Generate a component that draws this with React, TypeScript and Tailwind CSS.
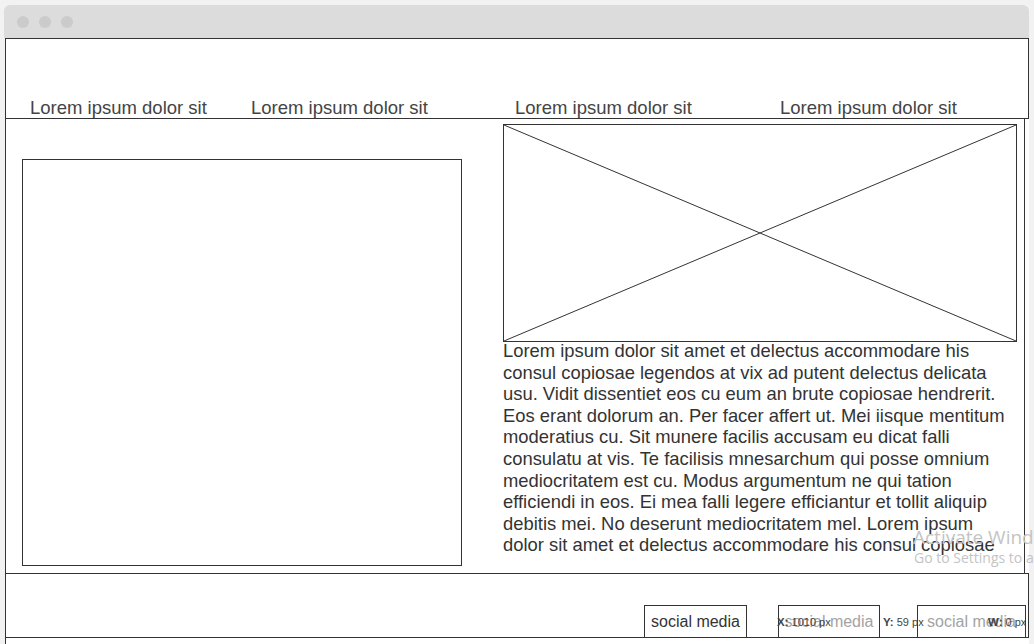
import React from 'react';

const navItems = [
  { label: 'Lorem ipsum dolor sit', width: 'w-[221px]' },
  { label: 'Lorem ipsum dolor sit', width: 'w-[264px]' },
  { label: 'Lorem ipsum dolor sit', width: 'w-[265px]' },
  { label: 'Lorem ipsum dolor sit', width: 'w-[220px]' },
];

const bodyText =
  'Lorem ipsum dolor sit amet et delectus accommodare his consul copiosae legendos at vix ad putent delectus delicata usu. Vidit dissentiet eos cu eum an brute copiosae hendrerit. Eos erant dolorum an. Per facer affert ut. Mei iisque mentitum moderatius cu. Sit munere facilis accusam eu dicat falli consulatu at vis. Te facilisis mnesarchum qui posse omnium mediocritatem est cu. Modus argumentum ne qui tation efficiendi in eos. Ei mea falli legere efficiantur et tollit aliquip debitis mei. No deserunt mediocritatem mel. Lorem ipsum dolor sit amet et delectus accommodare his consul copiosae';

function ImagePlaceholder() {
  return (
    <div className="relative w-[514px] h-[218px] border border-[#333]">
      <svg className="absolute inset-0 w-full h-full" viewBox="0 0 512 216" preserveAspectRatio="none">
        <line x1="0" y1="0" x2="512" y2="216" stroke="#333" strokeWidth="1" />
        <line x1="512" y1="0" x2="0" y2="216" stroke="#333" strokeWidth="1" />
      </svg>
    </div>
  );
}

function Coord({ k, v }: { k: string; v: string }) {
  return (
    <span className="text-[11px] text-[#444] whitespace-nowrap">
      <span className="font-bold text-[11.5px]">{k}</span> {v}
    </span>
  );
}

export default function App() {
  return (
    <div className="relative w-[1034px] h-[644px] overflow-hidden bg-[#f2f2f2] pt-[5px] pl-[4px] font-['Liberation_Sans',Arial,sans-serif] text-[#333]">
      {/* window title bar */}
      <div className="w-[1025px] h-[33px] bg-[#dcdcdc] rounded-t-[6px] flex items-center gap-[10px] pl-[13px]">
        <span className="w-[12px] h-[12px] rounded-full bg-[#cbcbcb]" />
        <span className="w-[12px] h-[12px] rounded-full bg-[#cbcbcb]" />
        <span className="w-[12px] h-[12px] rounded-full bg-[#cbcbcb]" />
      </div>

      <div className="ml-[1px] w-[1024px] h-[606px] bg-white border-l border-[#333]">
        {/* header nav */}
        <div className="h-[81px] border-y border-r border-[#333] flex items-end pl-[24px]">
          {navItems.map((n, i) => (
            <div key={i} className={`${n.width} text-[18.5px] leading-[21px] text-[#444] whitespace-nowrap`}>
              {n.label}
            </div>
          ))}
        </div>

        {/* main */}
        <div className="w-[1019px] h-[454px] border-r border-[#333] flex">
          <div className="ml-[16px] mt-[40px] w-[440px] h-[407px] border border-[#333]" />
          <div className="ml-[41px] mt-[5px] w-[514px] flex flex-col">
            <ImagePlaceholder />
            <p className="mt-[-2px] text-[18.4px] leading-[21.6px] text-[#333] w-[512px]">{bodyText}</p>
          </div>
        </div>

        {/* footer */}
        <div className="w-[1023px] h-[65px] border-y border-r border-[#333] flex items-end">
          <div className="ml-[638px] mb-[-1px] w-[103px] h-[33px] border border-[#333] flex items-center justify-center text-[16px] text-[#333]">
            social media
          </div>
          <div className="ml-[31px] mb-[-1px] w-[102px] h-[33px] border border-[#333] flex items-center justify-center text-[16px] text-[#a3a3a3]">
            social media
          </div>
          <div className="ml-[37px] mb-[-1px] w-[109px] h-[33px] border border-[#333] flex items-center justify-center text-[16px] text-[#a3a3a3]">
            social media
          </div>
        </div>
      </div>

      {/* coordinate tooltips over footer */}
      <div className="absolute left-[777px] top-[609px]">
        <Coord k="X:" v="1010 px" />
      </div>
      <div className="absolute left-[883px] top-[609px]">
        <Coord k="Y:" v="59 px" />
      </div>
      <div className="absolute left-[988px] top-[609px]">
        <Coord k="W:" v="0 px" />
      </div>

      {/* OS watermark */}
      <div className="absolute left-[913px] top-[525px] font-['Open_Sans',sans-serif] text-[#c4c4c4] whitespace-nowrap">
        <div className="text-[19px] leading-[24px]">Activate Windows</div>
        <div className="text-[14px] leading-[18px] ml-[1px]">Go to Settings to activate Windows.</div>
      </div>
    </div>
  );
}
